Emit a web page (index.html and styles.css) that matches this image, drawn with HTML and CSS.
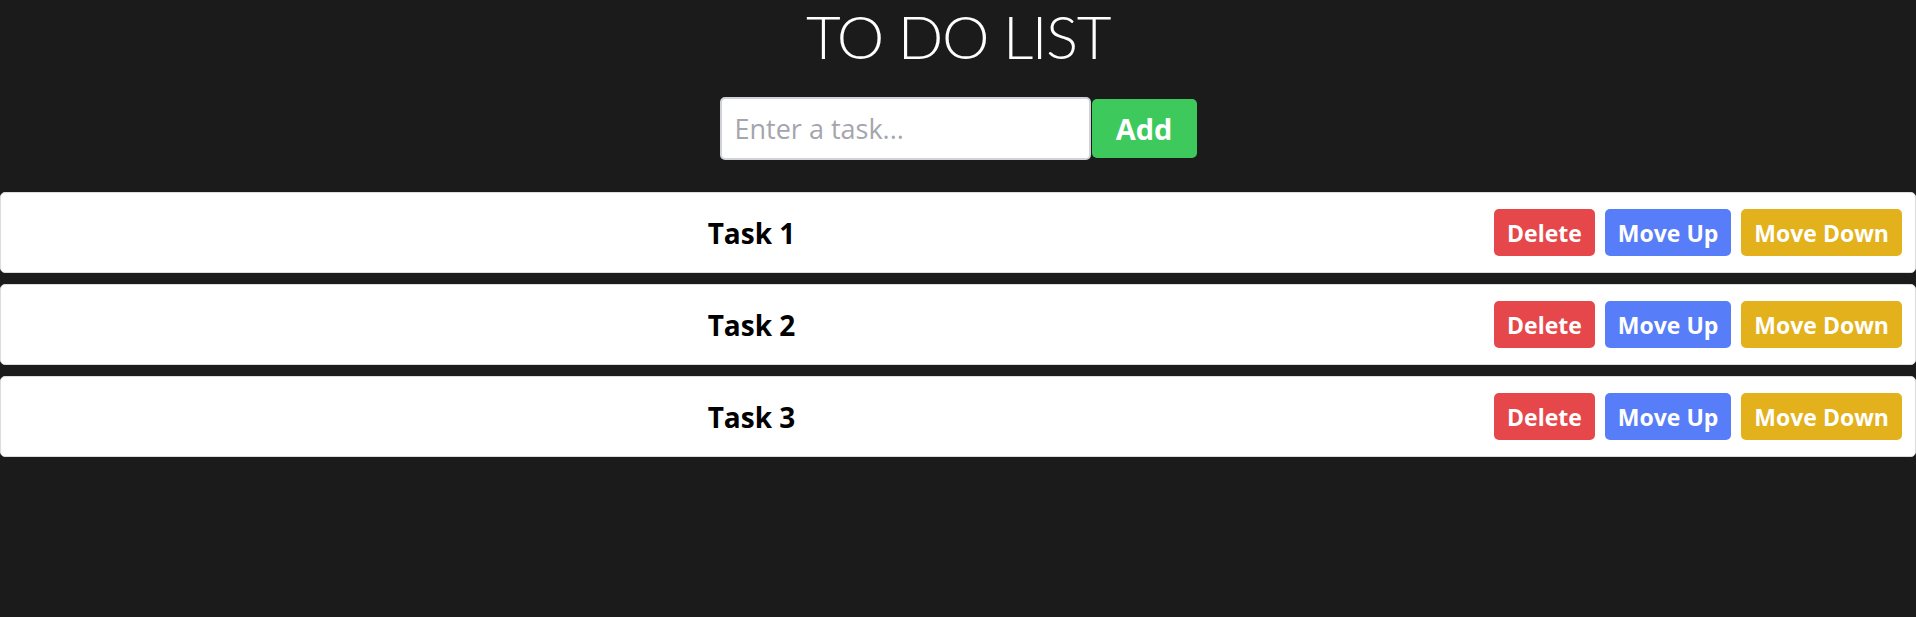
FILE: index.html
```html
<!DOCTYPE html>
<html lang="en">
<head>
<meta charset="utf-8">
<title>To Do List</title>
<link rel="stylesheet" href="styles.css">
</head>
<body>
  <h1 class="title">TO DO LIST</h1>
  <div class="add-row">
    <input class="task-input" type="text" placeholder="Enter a task...">
    <button class="btn btn-add">Add</button>
  </div>
  <ul class="list">
    <li class="item">
      <span class="item-text">Task 1</span>
      <button class="btn btn-delete">Delete</button>
      <button class="btn btn-up">Move Up</button>
      <button class="btn btn-down">Move Down</button>
    </li>
    <li class="item">
      <span class="item-text">Task 2</span>
      <button class="btn btn-delete">Delete</button>
      <button class="btn btn-up">Move Up</button>
      <button class="btn btn-down">Move Down</button>
    </li>
    <li class="item">
      <span class="item-text">Task 3</span>
      <button class="btn btn-delete">Delete</button>
      <button class="btn btn-up">Move Up</button>
      <button class="btn btn-down">Move Down</button>
    </li>
  </ul>
</body>
</html>
```
FILE: styles.css
```css
* { box-sizing: border-box; }

body {
  margin: 0;
  background: #1b1b1b;
  font-family: "Open Sans", "Noto Sans", sans-serif;
  color: #000;
}

.title {
  margin: 0;
  font-family: Lato, "Open Sans", sans-serif;
  font-size: 60px;
  line-height: 72px;
  font-weight: 300;
  letter-spacing: -1.4px;
  color: #fff;
  text-align: center;
}

.add-row {
  margin-top: 25px;
  display: flex;
  justify-content: center;
  align-items: center;
  gap: 1px;
}

.task-input {
  width: 371px;
  height: 63px;
  border: 2px solid #cfd2d6;
  border-radius: 5px;
  padding: 0 13px;
  font-family: inherit;
  font-size: 27px;
  color: #222;
  outline: none;
}

.task-input::placeholder { color: #a3a6ad; }

.btn {
  border: none;
  border-radius: 5px;
  font-family: inherit;
  font-weight: 700;
  color: #fff;
  cursor: pointer;
}

.btn-add {
  width: 105px;
  height: 59px;
  background: #3ec95c;
  font-size: 29px;
}

.list {
  list-style: none;
  margin: 32px 0 0;
  padding: 0;
  display: flex;
  flex-direction: column;
  gap: 11px;
}

.item {
  height: 81px;
  background: #fff;
  border: 1px solid #dcdcdc;
  border-radius: 5px;
  display: flex;
  align-items: center;
  gap: 10px;
  padding: 0 13px 0 18px;
}

.item-text {
  flex: 1;
  text-align: center;
  font-size: 28px;
  font-weight: 700;
}

.item .btn {
  height: 47px;
  font-size: 23px;
  padding: 0 13px;
}

.btn-delete { background: #e5474b; }
.btn-up { background: #587df8; }
.btn-down { background: #e2b11b; }
```
